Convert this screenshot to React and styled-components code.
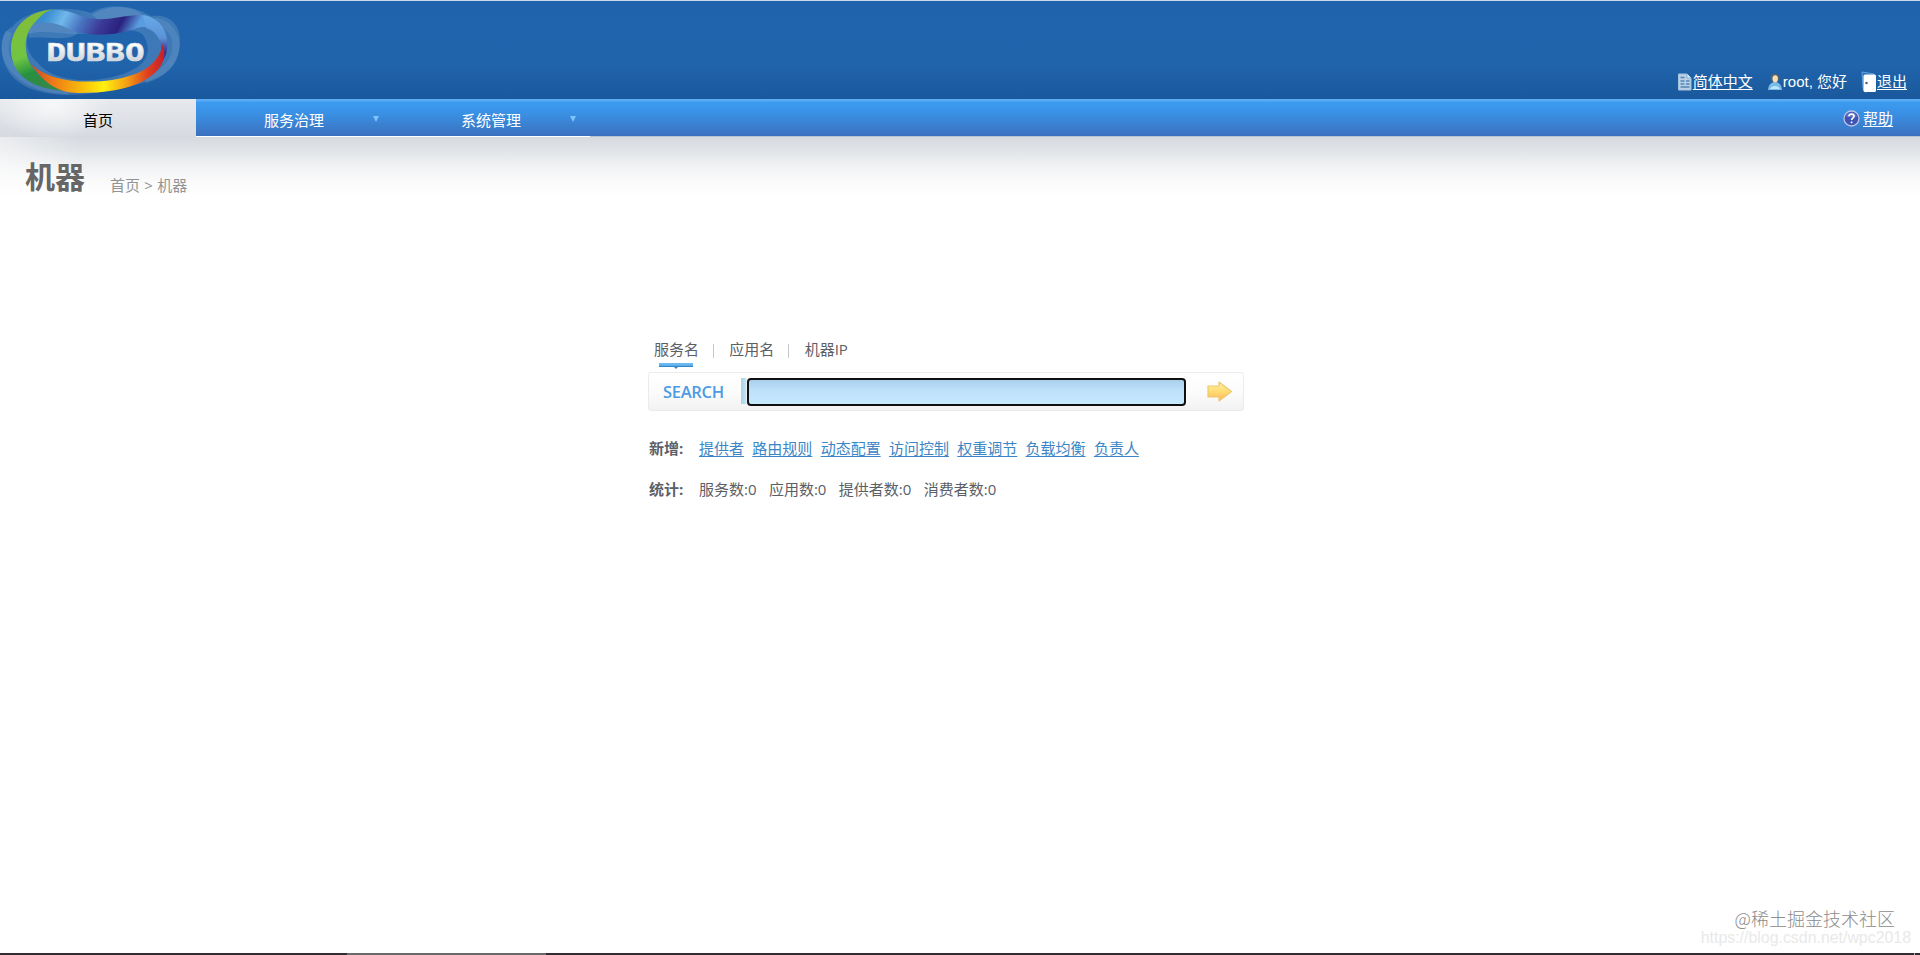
import React from "react";
import styled, { createGlobalStyle, css } from "styled-components";

const GlobalStyle = createGlobalStyle`
  * { box-sizing: border-box; }
  body {
    margin: 0;
    background: #fff;
    color: #5b6066;
    font: 15px/20px "Open Sans", "Noto Sans CJK SC", sans-serif;
    overflow: hidden;
  }
  a { color: inherit; text-underline-offset: 2px; }
`;

const Page = styled.div`
  position: relative;
  height: 955px;
  display: flex;
  flex-direction: column;
`;

const Header = styled.header`
  height: 99px;
  flex: none;
  display: flex;
  justify-content: space-between;
  align-items: flex-end;
  border-top: 1px solid #c9d9ea;
  background: linear-gradient(#1f63ad, #2064ac 65%, #1a589c);
`;

const Logo = styled.svg`
  display: block;
  width: 184px;
  height: 98px;
`;

const UserBar = styled.div`
  display: flex;
  align-items: center;
  height: 22px;
  margin: 0 13px 6px 0;
  color: #fff;
  font-family: "Liberation Sans", "Noto Sans CJK SC", sans-serif;
`;

const UserItem = styled.span`
  display: flex;
  align-items: center;
  white-space: nowrap;
  margin-left: ${(p) => p.$gap || 0}px;
`;

const Icon = styled.svg`
  display: block;
  flex: none;
  width: ${(p) => p.$w}px;
  height: ${(p) => p.$h}px;
`;

const Nav = styled.nav`
  height: 38px;
  flex: none;
  display: flex;
  background: linear-gradient(#5cabf5 0 2px, #3c9bf0 3px, #3a93e7 12px, #3b71bf 37px, #b9c3d3 37px);
`;

const NavItem = styled.div`
  width: 197px;
  height: 38px;
  display: flex;
  align-items: center;
  justify-content: center;
  position: relative;
  padding: 4px 1px 0 0;
  color: #fff;
  border-bottom: 1px solid #fff;
  ${(p) =>
    p.$active &&
    css`
      width: 196px;
      padding: 3px 0 0;
      color: #000;
      border-bottom: 0;
      background:
        radial-gradient(ellipse 60px 34px at 52px 6px, #f6f7f8, rgba(246, 247, 248, 0)),
        linear-gradient(#e7e9ed, #d6dae0);
    `}
`;

const Caret = styled.i`
  position: absolute;
  right: 14px;
  top: 17px;
  border: 3.5px solid transparent;
  border-top: 6px solid #7dc4fa;
  border-bottom: 0;
`;

const Help = styled.div`
  margin-left: auto;
  display: flex;
  align-items: center;
  gap: 3px;
  height: 38px;
  padding: 0 27px 0 0;
  color: #fff;
`;

const Heading = styled.div`
  height: 88px;
  flex: none;
  display: flex;
  align-items: flex-start;
  padding: 20px 0 0 25px;
  background:
    linear-gradient(90deg, rgba(255, 255, 255, 0.5), rgba(255, 255, 255, 0) 80px),
    linear-gradient(#d6dae0, #dfe2e6 12px, #eff1f3 28px, #fbfbfc 46px, #fff 60px);
`;

const Title = styled.h1`
  margin: 0;
  font-size: 30px;
  line-height: 40px;
  font-weight: 700;
  color: #666;
`;

const Crumbs = styled.div`
  margin: 18px 0 0 25px;
  color: #939393;
  word-spacing: 0.4px;
`;

const Main = styled.main`
  width: 596px;
  margin: 114px 0 0 648px;
`;

const Tabs = styled.div`
  display: flex;
  height: 33px;
  padding-left: 6px;
`;

const Tab = styled.div`
  height: 29px;
  position: relative;
  white-space: nowrap;
  & + & {
    margin-left: 14px;
    padding-left: 16.3px;
  }
  & + &::before {
    content: "";
    position: absolute;
    left: 0;
    top: 5px;
    width: 1px;
    height: 14px;
    background: #c3c7ce;
  }
`;

const Marker = styled(Icon)`
  position: absolute;
  left: 5px;
  top: 24px;
`;

const SearchBox = styled.div`
  width: 596px;
  height: 39px;
  display: flex;
  align-items: center;
  border: 1px solid #ebebec;
  border-radius: 3px;
  background: linear-gradient(#fff, #fbfbfb 55%, #f2f2f2);
`;

const SearchLabel = styled.label`
  width: 92px;
  padding: 1px 0 0 14px;
  color: #4b9be4;
  font: 600 16.5px/24px "Open Sans", sans-serif;
  letter-spacing: -0.3px;
`;

const Field = styled.div`
  width: 446px;
  height: 28px;
  padding-left: 6px;
  background: linear-gradient(90deg, #a9d2ea, #c4e2f1 5px, #fff 6px);
  background-size: 100% 26px;
  background-repeat: no-repeat;
`;

const Input = styled.input`
  display: block;
  width: 439px;
  height: 28px;
  padding: 0 8px;
  border: 2px solid #101010;
  border-radius: 4px;
  outline: 0;
  background: linear-gradient(#a9cfec, #bfe2fb 45%, #c6e9fd);
  font: inherit;
`;

const Go = styled.button`
  border: 0;
  padding: 0;
  margin-left: 20px;
  background: none;
`;

const Row = styled.div`
  display: flex;
  height: 20px;
  margin-top: ${(p) => p.$top}px;
  padding-left: 1px;
  white-space: nowrap;
`;

const RowLabel = styled.strong`
  width: 50px;
  flex: none;
`;

const Items = styled.div`
  display: flex;
  gap: ${(p) => p.$gap}px;
  color: ${(p) => p.$color || "inherit"};
`;

const Watermark = styled.div`
  position: absolute;
  right: 25px;
  bottom: 26px;
  color: #8c8c8c;
  font: 300 18px/22px "Noto Sans CJK SC", sans-serif;
`;

const SourceUrl = styled.div`
  position: absolute;
  right: 9px;
  bottom: 9px;
  color: #e9e9e9;
  font: 15.9px/17px "Liberation Sans", sans-serif;
`;

const BottomEdge = styled.div`
  position: absolute;
  left: 0;
  right: 0;
  bottom: 0;
  height: 2px;
  background: linear-gradient(90deg, #302c30 347px, #6a6a6a 347px 546px, #302c30 546px 1914px, #aaa 1914px 1915px, #302c30 1915px);
`;

const links = ["提供者", "路由规则", "动态配置", "访问控制", "权重调节", "负载均衡", "负责人"];
const stats = ["服务数:0", "应用数:0", "提供者数:0", "消费者数:0"];

function DubboLogo() {
  return (
    <Logo viewBox="0 1 184 98">
      <defs>
        <linearGradient id="green" x1="0" y1="0" x2="0.25" y2="1">
          <stop offset="0.1" stopColor="#83bd38" />
          <stop offset="0.6" stopColor="#70c543" />
          <stop offset="0.82" stopColor="#26913f" />
          <stop offset="1" stopColor="#328948" />
        </linearGradient>
        <linearGradient id="top" x1="0" y1="0" x2="1" y2="0.12">
          <stop offset="0" stopColor="#2f88cb" />
          <stop offset="0.12" stopColor="#3d90d2" />
          <stop offset="0.25" stopColor="#70b8ec" />
          <stop offset="0.4" stopColor="#4774c0" />
          <stop offset="0.55" stopColor="#3d3b98" />
          <stop offset="0.7" stopColor="#29217d" />
          <stop offset="0.84" stopColor="#5b9ee0" />
          <stop offset="1" stopColor="#5595d8" />
        </linearGradient>
        <linearGradient id="side" x1="0" y1="0" x2="0" y2="1">
          <stop offset="0" stopColor="#67aae8" />
          <stop offset="0.45" stopColor="#5c93d8" />
          <stop offset="0.75" stopColor="#34308c" />
          <stop offset="1" stopColor="#54307d" />
        </linearGradient>
        <linearGradient id="fire">
          <stop offset="0" stopColor="#c94724" />
          <stop offset="0.18" stopColor="#ef7b18" />
          <stop offset="0.38" stopColor="#f8bb09" />
          <stop offset="0.55" stopColor="#fff010" />
          <stop offset="0.72" stopColor="#f5a013" />
          <stop offset="0.87" stopColor="#df421f" />
          <stop offset="1" stopColor="#c71f2a" />
        </linearGradient>
        <linearGradient id="silver" x1="0" y1="0" x2="0" y2="1">
          <stop offset="0.2" stopColor="#fff" />
          <stop offset="1" stopColor="#bcc5ce" />
        </linearGradient>
      </defs>
      <g fill="#83a9cf" fillOpacity="0.3">
        <path fillRule="evenodd" d="M12 27C-4 34-1 64 15 79C35 98 78 97 107 91C139 84 170 81 178 55C185 30 174 13 151 16C128 3 105 4 91 13C65 5 28 8 12 27ZM29 34C45 28 74 38 95 32C117 30 135 28 143 35C153 50 147 65 128 72C96 85 53 83 37 62C29 55 24 44 29 34Z" />
        <path d="M29 25C54 11 73 17 77 34C66 42 43 36 29 38Z" />
        <path d="M92 15C112 1 140 7 147 20L113 31Z" />
      </g>
      <path fill="none" stroke="#90b4d6" strokeOpacity="0.2" strokeWidth="7" d="M9 32C-5 62 22 89 69 91M155 21C185 27 184 69 145 80" />
      <path fill="url(#green)" d="M53 9.500C26 11 11 29 11 49C11 73 29 89 66 91C45 83 27 69 26 49C24 30 36 18 53 9.500Z" />
      <path fill="url(#top)" d="M35 24C40 16 45 11 52 10C62 9 71 12 81 16C105 24 123 14 143 15C153 16 162 23 166 39L158 34C150 27 145 26 137 28C117 36 93 36 77 32C63 27 53 19 35 24Z" />
      <path fill="url(#side)" d="M143 15C160 18 169 31 167 49C166 58 162 62 158 65C165 47 160 32 146 28Z" />
      <path fill="url(#fire)" d="M30 63C51 84 88 83 112 80C141 75 159 65 163 43C167 59 162 70 145 80C128 90 103 93 79 93C55 93 42 80 30 63Z" />
      <text x="46.500" y="61" textLength="98" lengthAdjust="spacingAndGlyphs" fill="url(#silver)" stroke="#d8dde2" strokeWidth="0.700" strokeLinejoin="round" fontFamily="DejaVu Sans Mono" fontWeight="700" fontSize="25">DUBBO</text>
    </Logo>
  );
}

export default function App() {
  return (
    <Page>
      <GlobalStyle />
      <Header>
        <DubboLogo />
        <UserBar>
          <UserItem>
            <Icon $w={15} $h={18} viewBox="0 0 15 18">
              <path d="M0.500 1H9L13 5V17H0.500Z" fill="#b9d0e6" stroke="#a3c2de" />
              <path d="M9 1V5H13" fill="#eef6fc" stroke="#83abd0" />
              <path d="M2.500 4.500H6.500M2.500 8H6.500M8 8H11.500M2.500 11H6.500M8 11H11.500M2.500 14H11.500" stroke="#5685b2" strokeWidth="1.400" />
            </Icon>
            <a href="#lang">简体中文</a>
          </UserItem>
          <UserItem $gap={15}>
            <Icon $w={15} $h={18} viewBox="0 0 15 18">
              <path d="M0 17C0.500 11 4 9 7 9S13.500 11 14 17Z" fill="#7bbbe8" />
              <path d="M2 16C4 12 10 12 12 16Z" fill="#bce5fa" />
              <circle cx="7" cy="5" r="4.200" fill="#5e6263" />
              <ellipse cx="7.200" cy="5.800" rx="2.700" ry="3.600" fill="#f5dfb4" />
            </Icon>
            root, 您好
          </UserItem>
          <UserItem $gap={14}>
            <Icon $w={16} $h={22} viewBox="0 0 16 22">
              <path d="M1 1L13 3V19L4 21L2 17Z" fill="#2b71b7" stroke="#62a4df" />
              <rect x="2.500" y="3.500" width="12.500" height="17.500" rx="1.500" fill="#fff" />
              <circle cx="5.500" cy="12" r="1.300" fill="#53677d" />
            </Icon>
            <a href="#logout">退出</a>
          </UserItem>
        </UserBar>
      </Header>
      <Nav>
        <NavItem $active>首页</NavItem>
        <NavItem>服务治理<Caret /></NavItem>
        <NavItem>系统管理<Caret /></NavItem>
        <Help>
          <Icon $w={17} $h={17} viewBox="0 0 17 17">
            <circle cx="8.500" cy="8.500" r="7.500" fill="#4054b4" stroke="#b4c3e7" strokeWidth="1.300" />
            <path d="M3 7C4 1 13 1 14 7Z" fill="#8190d1" opacity=".55" />
            <path d="M6 6.300C6.200 3.300 11 3.400 11 6.200C11 8.200 8.600 8 8.600 10M8.600 11.600V13.200" fill="none" stroke="#fff" strokeWidth="1.700" />
          </Icon>
          <a href="#help">帮助</a>
        </Help>
      </Nav>
      <Heading>
        <Title>机器</Title>
        <Crumbs>首页 &gt; 机器</Crumbs>
      </Heading>
      <Main>
        <Tabs>
          <Tab>
            服务名
            <Marker $w={34} $h={6} viewBox="0 0 34 6">
              <path d="M0 0H34V4H0Z" fill="#6ab8f0" />
              <path d="M0 2.800H34V4H19L17 6L15 4H0Z" fill="#3389cb" />
            </Marker>
          </Tab>
          <Tab>应用名</Tab>
          <Tab>机器IP</Tab>
        </Tabs>
        <SearchBox>
          <SearchLabel htmlFor="keyword">SEARCH</SearchLabel>
          <Field><Input id="keyword" /></Field>
          <Go aria-label="Search">
            <Icon $w={26} $h={21} viewBox="0 0 26 21">
              <defs>
                <linearGradient id="gold" x1="0" y1="0" x2="0" y2="1">
                  <stop offset="0" stopColor="#fff0a0" />
                  <stop offset="0.5" stopColor="#ffdc73" />
                  <stop offset="1" stopColor="#ffb65c" />
                </linearGradient>
              </defs>
              <path d="M1 5H12V1L24.500 10.500L12 20V16H1Z" fill="url(#gold)" stroke="#edc872" strokeWidth="1.200" strokeLinejoin="round" />
            </Icon>
          </Go>
        </SearchBox>
        <Row $top={27}>
          <RowLabel>新增:</RowLabel>
          <Items $gap={8.3} $color="#3d86c6">
            {links.map((t) => <a key={t} href="#add">{t}</a>)}
          </Items>
        </Row>
        <Row $top={21}>
          <RowLabel>统计:</RowLabel>
          <Items $gap={12.4}>
            {stats.map((t) => <span key={t}>{t}</span>)}
          </Items>
        </Row>
      </Main>
      <SourceUrl>https://blog.csdn.net/wpc2018</SourceUrl>
      <Watermark>@稀土掘金技术社区</Watermark>
      <BottomEdge />
    </Page>
  );
}
